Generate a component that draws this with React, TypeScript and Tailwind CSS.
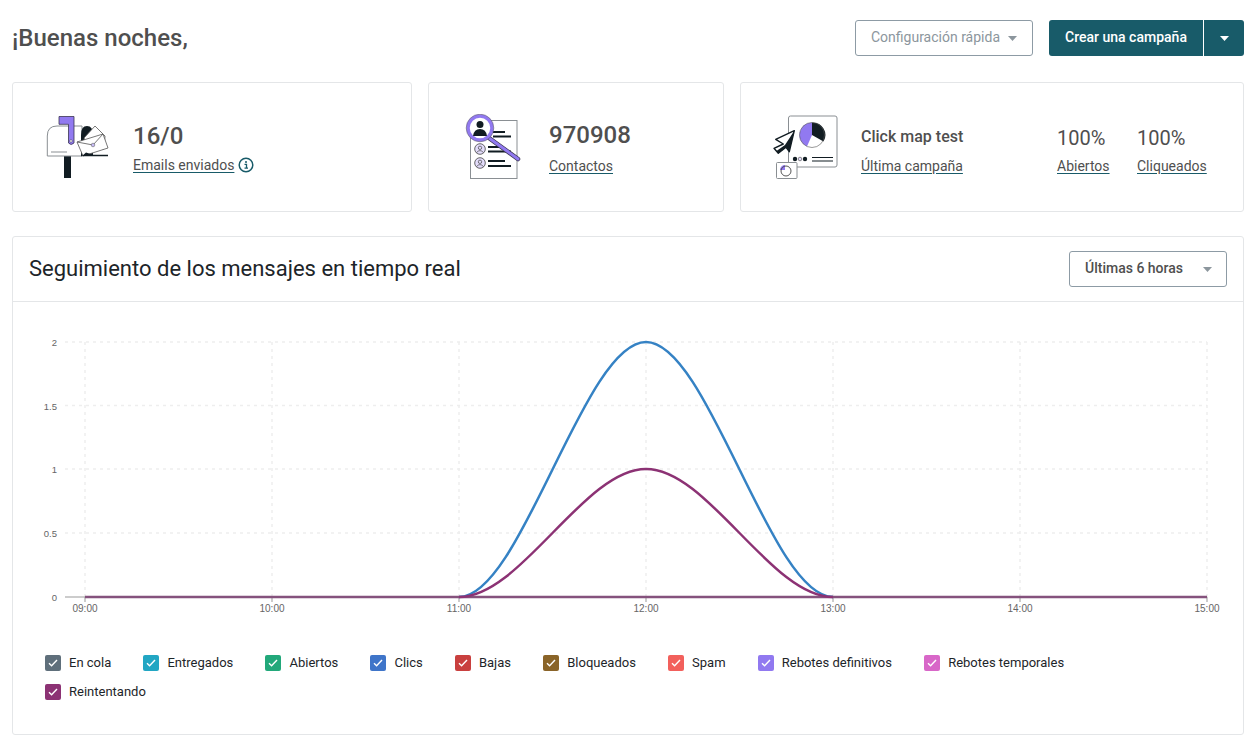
const legend = [
  { label: 'En cola', box: 'bg-[#5f6f7b]' },
  { label: 'Entregados', box: 'bg-[#22a6c3]' },
  { label: 'Abiertos', box: 'bg-[#22a87a]' },
  { label: 'Clics', box: 'bg-[#3f75c9]' },
  { label: 'Bajas', box: 'bg-[#c9403f]' },
  { label: 'Bloqueados', box: 'bg-[#8a6428]' },
  { label: 'Spam', box: 'bg-[#f2605c]' },
  { label: 'Rebotes definitivos', box: 'bg-[#9179f0]' },
  { label: 'Rebotes temporales', box: 'bg-[#d867c8]' },
  { label: 'Reintentando', box: 'bg-[#8c3274]' },
]

const hours = ['09:00', '10:00', '11:00', '12:00', '13:00', '14:00', '15:00']
const yTicks = [
  { label: '2', y: 342 },
  { label: '1.5', y: 405.5 },
  { label: '1', y: 469 },
  { label: '0.5', y: 533 },
  { label: '0', y: 597 },
]

function Caret({ className }: { className: string }) {
  return (
    <svg width="9" height="5" viewBox="0 0 9 5" className={className}>
      <path d="M0 0h9L4.500 5z" fill="currentColor" />
    </svg>
  )
}

function MailboxIcon() {
  return (
    <svg width="64" height="64" viewBox="0 0 64 64" className="shrink-0">
      <rect x="18" y="41" width="7" height="22" fill="#111c22" />
      <path d="M1.300 41V21Q1.300 11 11 11H36V41Z" fill="#fff" stroke="#8a8f93" strokeWidth="1" />
      <path d="M5 37H21" stroke="#8a8f93" strokeWidth="1" />
      <path d="M35 41V20Q35 11 41 11Q47 11 47 20V41Z" fill="#111c22" />
      <path d="M13 1.500H28V28Q25 31 22.500 28V9.300H13Z" fill="#9179f0" stroke="#3a3550" strokeWidth="0.8" />
      <circle cx="25" cy="26" r="1.300" fill="#fff" stroke="#3a3550" strokeWidth="0.5" />
      <path d="M35 40.500H62" stroke="#111c22" strokeWidth="1.500" />
      <path d="M38 23L49 11L59 21L58 34L44 36Z" fill="#fff" stroke="#555" strokeWidth="0.8" />
      <path d="M31 27L57 19L62 33L37 41Z" fill="#fff" stroke="#555" strokeWidth="0.8" />
      <path d="M31 27L47 30L57 19" fill="none" stroke="#555" strokeWidth="0.8" />
      <circle cx="47" cy="30" r="1.800" fill="#c7bbf6" stroke="#555" strokeWidth="0.5" />
      <path d="M36 41L40 37.500L46 39.500L44 41Z" fill="#111c22" />
    </svg>
  )
}

function ContactsIcon() {
  const person = (cy: number) => (
    <g>
      <circle cx="16" cy={cy} r="5.300" fill="#e3dcfb" stroke="#444" strokeWidth="0.8" />
      <circle cx="16" cy={cy - 1.2} r="1.700" fill="none" stroke="#444" strokeWidth="0.7" />
      <path d={`M12.500 ${cy + 3.6}Q16 ${cy - 0.4} 19.500 ${cy + 3.6}`} fill="none" stroke="#444" strokeWidth="0.7" />
    </g>
  )
  return (
    <svg width="60" height="66" viewBox="0 0 60 66" className="shrink-0">
      <rect x="6.500" y="6.500" width="46.500" height="58" fill="#fff" stroke="#8a8f93" strokeWidth="1" />
      <path d="M29 18H41M29 22.500H47M24 33H36M24 37.500H47M24 47H41M24 52H47" stroke="#111c22" strokeWidth="2.200" />
      {person(35)}
      {person(49)}
      <path d="M25 24L54 45" stroke="#3a3550" strokeWidth="4.500" strokeLinecap="round" />
      <path d="M25 24L54 45" stroke="#9179f0" strokeWidth="3" strokeLinecap="round" />
      <circle cx="16" cy="14" r="12" fill="#fff" stroke="#9179f0" strokeWidth="3.500" />
      <circle cx="16" cy="14" r="13.800" fill="none" stroke="#555" strokeWidth="0.5" />
      <circle cx="16" cy="10.500" r="3.500" fill="#111c22" />
      <path d="M9 22Q10 15 16 15Q22 15 23 22Z" fill="#111c22" />
    </svg>
  )
}

function CampaignIcon() {
  return (
    <svg width="68" height="66" viewBox="0 0 68 66" className="shrink-0">
      <rect x="16.500" y="2" width="48.500" height="51" rx="2" fill="#fff" stroke="#8a8f93" strokeWidth="1" />
      <path d="M40 21V8.500A12.500 12.500 0 0 0 35 32.500Z" fill="#9179f0" />
      <path d="M40 21V8.500A12.500 12.500 0 0 1 51.500 27.500Z" fill="#111c22" />
      <circle cx="40" cy="21" r="12.500" fill="none" stroke="#555" strokeWidth="0.6" />
      <circle cx="23" cy="45" r="2.200" fill="#111c22" />
      <circle cx="28" cy="45" r="1.800" fill="#e3dcfb" stroke="#444" strokeWidth="0.6" />
      <circle cx="33" cy="45" r="2.200" fill="#111c22" />
      <path d="M40 43.500H61M40 47H61" stroke="#111c22" strokeWidth="1.100" />
      <path d="M22.300 16.700L3.700 25.300L11.300 30L2 34.300L6.300 39.300L14 33.300L17.300 37.700Z" fill="#fff" stroke="#111c22" strokeWidth="1.400" strokeLinejoin="round" />
      <path d="M22.300 16.700L17.300 37.700L14 33.300L6.300 39.300L4.500 37L13 31Z" fill="#111c22" />
      <rect x="4.500" y="48.500" width="20.500" height="16" rx="1" fill="#fff" stroke="#8a8f93" strokeWidth="1" />
      <path d="M13 51A5 5 0 0 0 8 56H13Z" fill="#9179f0" />
      <circle cx="14" cy="57" r="5" fill="none" stroke="#444" strokeWidth="0.9" />
    </svg>
  )
}

function RealtimeChart() {
  return (
    <svg width="1230" height="330" viewBox="13 302 1230 330" className="block">
      {yTicks.map((t) => (
        <g key={t.label}>
          {t.y !== 597 && <path d={`M65 ${t.y}H1207`} stroke="#eeeeee" strokeWidth="1.500" strokeDasharray="3 4" />}
          <text x="57" y={t.y + 4} textAnchor="end" fontSize="9.500" fill="#666" fontFamily="Liberation Sans, sans-serif">
            {t.label}
          </text>
        </g>
      ))}
      {hours.map((h, i) => {
        const x = 85 + i * 187
        return (
          <g key={h}>
            <path d={`M${x} 342V597`} stroke="#eeeeee" strokeWidth="1.500" strokeDasharray="3 4" />
            <path d={`M${x} 597V602`} stroke="#999" strokeWidth="1" />
            <text x={x} y="612" textAnchor="middle" fontSize="10" fill="#666" fontFamily="Liberation Sans, sans-serif">
              {h}
            </text>
          </g>
        )
      })}
      <path d="M65 597H1207" stroke="#999" strokeWidth="1" />
      <path d="M85 597H1207" stroke="#85527d" strokeWidth="2.500" />
      <path d="M459 597C521 597 584 342 646 342C708 342 771 597 833 597" fill="none" stroke="#3582c4" strokeWidth="2.500" />
      <path d="M459 597C521 597 584 469 646 469C708 469 771 597 833 597" fill="none" stroke="#8c3274" strokeWidth="2.500" />
    </svg>
  )
}

export default function App() {
  return (
    <div className="min-h-[747px] bg-white pl-3 pr-2.5 pt-5 font-['Roboto',sans-serif] text-[#4f4f4f]">
      {/* Top bar */}
      <div className="flex h-9 items-center justify-between">
        <h1 className="text-2xl font-medium">¡Buenas noches,</h1>
        <div className="flex items-center gap-4">
          <button className="flex h-9 w-[178px] items-center justify-center gap-2 rounded-[3px] border border-[#8d9ba5] pb-[2px] text-sm text-[#8c969d]">
            Configuración rápida
            <Caret className="mt-[2px] text-[#8c969d]" />
          </button>
          <div className="flex h-9 items-stretch gap-px text-white">
            <button className="w-[154px] rounded-l-[3px] bg-[#185b69] pb-[2px] text-sm font-medium">Crear una campaña</button>
            <button className="flex w-10 items-center justify-center rounded-r-[3px] bg-[#185b69]">
              <Caret className="text-white" />
            </button>
          </div>
        </div>
      </div>

      {/* Stat cards */}
      <div className="mt-[26px] flex h-[130px] gap-4">
        <div className="flex w-[400px] items-center gap-[23px] rounded-[3px] border border-[#e4e6e8] pl-[33px]">
          <MailboxIcon />
          <div className="flex flex-col pt-[3px]">
            <span className="text-2xl font-medium leading-7">16/0</span>
            <span className="mt-[5px] flex items-center gap-1 text-sm leading-5">
              <a className="underline decoration-[#185b69] underline-offset-2">Emails enviados</a>
              <svg width="16" height="16" viewBox="0 0 16 16">
                <circle cx="8" cy="8" r="6.800" fill="none" stroke="#185b69" strokeWidth="1.500" />
                <circle cx="8" cy="5" r="1" fill="#185b69" />
                <path d="M6.500 7.300H8.500V11M6.500 11.200H10" fill="none" stroke="#185b69" strokeWidth="1.300" />
              </svg>
            </span>
          </div>
        </div>

        <div className="flex w-[296px] items-center gap-[25px] rounded-[3px] border border-[#e4e6e8] pl-[35px]">
          <ContactsIcon />
          <div className="flex flex-col pt-[3px]">
            <span className="text-2xl font-medium leading-7">970908</span>
            <a className="mt-[7px] text-sm leading-5 underline decoration-[#185b69] underline-offset-2">Contactos</a>
          </div>
        </div>

        <div className="flex flex-1 items-center rounded-[3px] border border-[#e4e6e8] pl-[31px]">
          <CampaignIcon />
          <div className="ml-[21px] flex w-[196px] flex-col pt-[4px]">
            <span className="text-base font-medium leading-7">Click map test</span>
            <a className="mt-[5px] w-fit text-sm leading-5 underline decoration-[#185b69] underline-offset-2">Última campaña</a>
          </div>
          <div className="flex w-20 flex-col pt-[6px]">
            <span className="text-xl leading-7">100%</span>
            <a className="mt-[4px] w-fit text-sm leading-5 underline decoration-[#185b69] underline-offset-2">Abiertos</a>
          </div>
          <div className="flex flex-col pt-[6px]">
            <span className="text-xl leading-7">100%</span>
            <a className="mt-[4px] w-fit text-sm leading-5 underline decoration-[#185b69] underline-offset-2">Cliqueados</a>
          </div>
        </div>
      </div>

      {/* Real-time panel */}
      <div className="mt-6 h-[499px] rounded-[3px] border border-[#e4e6e8]">
        <div className="flex h-[65px] items-center justify-between border-b border-[#e4e6e8] pl-4 pr-4">
          <h2 className="pb-[2px] text-[22px] text-[#1d2529]">Seguimiento de los mensajes en tiempo real</h2>
          <button className="flex h-9 w-[158px] items-center justify-between rounded-[3px] border border-[#8d9ba5] pb-[2px] pl-[15px] pr-[14px] text-sm font-medium text-[#4f4f4f]">
            Últimas 6 horas
            <Caret className="mt-[2px] text-[#8c969d]" />
          </button>
        </div>
        <RealtimeChart />
        <div className="mt-[23px] flex flex-wrap gap-x-[32.2px] gap-y-[13px] pl-8 pr-[170px]">
          {legend.map((item) => (
            <label key={item.label} className="flex h-4 items-center gap-2 text-[13px] text-[#1d2529]">
              <span className={`flex h-4 w-4 items-center justify-center rounded-[2px] ${item.box}`}>
                <svg width="10" height="8" viewBox="0 0 10 8">
                  <path d="M1 4.200L3.600 6.800L9 1" fill="none" stroke="#fff" strokeWidth="1.400" />
                </svg>
              </span>
              {item.label}
            </label>
          ))}
        </div>
      </div>
    </div>
  )
}
